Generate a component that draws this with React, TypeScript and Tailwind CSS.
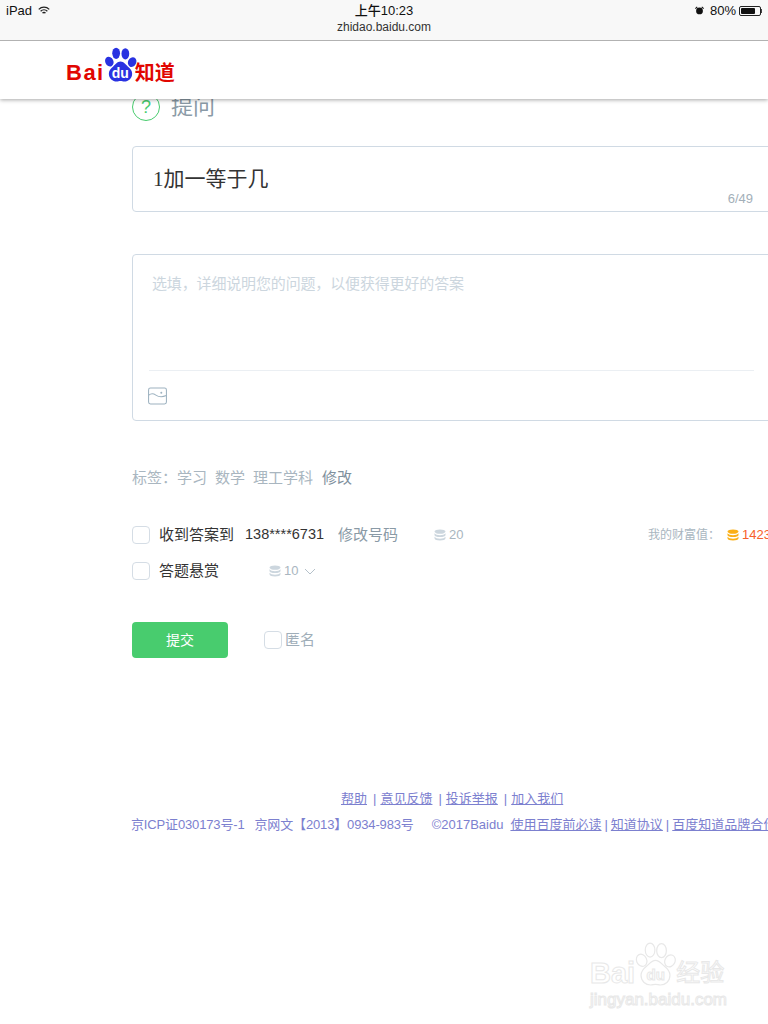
import React from "react";

const cjk = "font-['Liberation_Sans','Noto_Sans_CJK_SC',sans-serif]";

function Coins({ className }: { className: string }) {
  return (
    <svg viewBox="0 0 12 12" className={className} fill="currentColor">
      <ellipse cx="6" cy="2.600" rx="5.500" ry="2.200" />
      <path d="M.5 4.300c.8 1.300 3 2 5.500 2s4.700-.7 5.500-2v1.600c0 1.300-2.400 2.200-5.500 2.200S.5 7.200.5 5.900z" />
      <path d="M.5 7.700c.8 1.300 3 2 5.500 2s4.700-.7 5.500-2v1.500c0 1.300-2.400 2.300-5.500 2.300S.5 10.500.5 9.200z" />
    </svg>
  );
}

function Paw({ outline }: { outline?: boolean }) {
  const props = outline
    ? { fill: "#fff", stroke: "#e8e8e8", strokeWidth: 1 }
    : { fill: "#2932e1" };
  return (
    <svg viewBox="0 0 34 37" className="w-full h-full" {...props}>
      <ellipse cx="5.500" cy="15" rx="4.200" ry="5.200" transform="rotate(-25 5.500 15)" />
      <ellipse cx="12.500" cy="6.500" rx="4" ry="5.800" />
      <ellipse cx="22" cy="7" rx="4" ry="5.800" />
      <ellipse cx="29" cy="15.500" rx="4.200" ry="5.200" transform="rotate(25 29 15.500)" />
      <path d="M17 15c3.500 0 5 3 7.500 5 3 2.400 4.500 4.500 4.500 7.500 0 5-4 8-8 8-1.500 0-2.500-.5-4-.5s-2.500.5-4 .5c-4 0-8-3-8-8 0-3 1.500-5.100 4.500-7.500 2.500-2 4-5 7.500-5z" />
    </svg>
  );
}

function Box() {
  return <span className="block w-[18px] h-[18px] rounded-[4px] border border-[#d5dde5] bg-white shrink-0" />;
}

export default function App() {
  return (
    <div className={`relative w-[768px] h-[1024px] overflow-hidden bg-white ${cjk}`}>
      {/* ios status bar + address */}
      <div className="relative z-20 h-[41px] bg-[#f8f8f8] border-b border-[#b2b2b2] grid grid-cols-3 px-[6px] text-[#111]">
        <div className="flex items-start gap-[6px] pt-[3px] text-[13px] leading-[16px]">
          <span>iPad</span>
          <svg viewBox="0 0 16 12" className="w-[12px] h-[9px] mt-[3px]" fill="none" stroke="#222" strokeWidth="1.700">
            <path d="M1 4.500a10 10 0 0 1 14 0" />
            <path d="M3.500 7a6.500 6.500 0 0 1 9 0" />
            <path d="M6 9.500a2.800 2.800 0 0 1 4 0" />
          </svg>
        </div>
        <div className="flex flex-col items-center pt-[3px]">
          <span className="text-[13px] leading-[16px] font-medium">上午10:23</span>
          <span className="text-[12px] leading-[14px] mt-[1px] text-[#333]">zhidao.baidu.com</span>
        </div>
        <div className="flex items-start justify-end pt-[3px] text-[13px] leading-[16px]">
          <svg viewBox="0 0 12 12" className="w-[9px] h-[9px] mt-[3px] mr-[6px]" fill="#111">
            <circle cx="6" cy="6.500" r="4.500" />
            <path d="M0 3l2.500-2.500 1 1L1 4zM12 3L9.500.5l-1 1L11 4z" />
          </svg>
          <span>80%</span>
          <span className="ml-[3px] mt-[3px] w-[22px] h-[10px] border border-[#222] rounded-[2px] p-[1px] block">
            <span className="block h-full w-[80%] bg-[#111] rounded-[1px]" />
          </span>
          <span className="mt-[6px] w-[1px] h-[4px] bg-[#444] block" />
        </div>
      </div>

      {/* site header */}
      <header className="relative z-10 h-[58px] bg-white shadow-[0_1px_4px_rgba(0,0,0,0.35)] flex items-end pl-[66px] pb-[16px]">
        <div className="flex items-end h-[36px]">
          <span className="text-[#e10601] font-bold text-[22px] leading-[20px] tracking-[1.5px] font-['Liberation_Sans',sans-serif]">Bai</span>
          <span className="relative w-[33px] h-[36px] -ml-[1px] block">
            <Paw />
            <span className="absolute left-0 right-0 bottom-[3px] text-center text-white font-bold text-[14px] leading-[14px]">du</span>
          </span>
          <span className="text-[#e10601] font-bold text-[20px] leading-[20px] -ml-[2px]">知道</span>
        </div>
      </header>

      <main className="pl-[132px] w-[772px]">
        {/* title sits partly under the header */}
        <div className="flex items-center gap-[11px] -mt-[6px] h-[28px] mb-[25px]">
          <span className="w-[28px] h-[28px] rounded-full border-[1.500px] border-[#48cc6e] flex items-center justify-center text-[#48cc6e] text-[18px] leading-none">?</span>
          <span className="text-[22px] leading-[28px] text-[#8a9aa6]">提问</span>
        </div>

        <div className="relative h-[66px] border border-[#d0dae4] rounded-[4px] pl-[20px] pt-[19px]">
          <span className="block text-[21px] leading-[26px] text-[#333] font-['Liberation_Serif','Noto_Sans_CJK_SC',serif]">1加一等于几</span>
          <span className="absolute right-[18px] bottom-[5px] text-[13px] leading-[15px] text-[#a3afb9]">6/49</span>
        </div>

        <div className="mt-[42px] h-[167px] border border-[#d0dae4] rounded-[4px] pl-[16px] pr-[17px] flex flex-col">
          <div className="h-[116px] pl-[3px] pt-[20px] border-b border-[#ebeff3] text-[15px] leading-[18px] tracking-[-0.15px] text-[#ccd6de]">
            选填，详细说明您的问题，以便获得更好的答案
          </div>
          <svg viewBox="0 0 20 18" className="w-[19px] h-[18px] mt-[16px] -ml-[1px]" fill="none" stroke="#9db2c0" strokeWidth="1.100">
            <rect x="0.600" y="0.600" width="18.800" height="16.800" rx="2" />
            <path d="M0.800 8c3-2.500 5-1.800 7.500 0s5 3 11 .5" />
            <circle cx="14" cy="5.500" r="0.500" />
          </svg>
        </div>

        <div className="mt-[47px] flex items-center h-[20px] text-[15px] text-[#a9b6c0]">
          <span>标签：</span>
          <span>学习</span>
          <span className="ml-[8px]">数学</span>
          <span className="ml-[8px]">理工学科</span>
          <span className="ml-[9px] text-[#7f909d]">修改</span>
        </div>

        <div className="mt-[37px] relative flex items-center h-[20px] text-[15px]">
          <Box />
          <span className="ml-[9px] text-[#333]">收到答案到</span>
          <span className="ml-[11px] text-[14.500px] text-[#333]">138****6731</span>
          <span className="ml-[14px] text-[#8a9aa6]">修改号码</span>
          <Coins className="w-[12px] h-[12px] ml-[36px] text-[#ccd6de]" />
          <span className="ml-[3px] text-[13px] text-[#a9b6c0]">20</span>
          <span className="ml-[auto] mr-[7px] text-[12px] text-[#a9b6c0]">我的财富值：</span>
          <Coins className="w-[12px] h-[12px] text-[#fbb016]" />
          <span className="ml-[3px] text-[13px] text-[#f7602a] w-[30px] whitespace-nowrap">1423</span>
        </div>

        <div className="mt-[16px] flex items-center h-[20px] text-[15px]">
          <Box />
          <span className="ml-[9px] text-[#333]">答题悬赏</span>
          <Coins className="w-[12px] h-[12px] ml-[50px] text-[#ccd6de]" />
          <span className="ml-[3px] text-[13px] text-[#a9b6c0]">10</span>
          <svg viewBox="0 0 12 7" className="w-[12px] h-[7px] ml-[6px]" fill="none" stroke="#b5c1ca" strokeWidth="1">
            <path d="M1 1l5 5 5-5" />
          </svg>
        </div>

        <div className="mt-[41px] flex items-center">
          <button className="w-[96px] h-[36px] rounded-[4px] bg-[#48cc6e] text-white text-[14px]">提交</button>
          <span className="ml-[36px] flex items-center">
            <Box />
            <span className="ml-[3px] text-[15px] text-[#a0aeb9]">匿名</span>
          </span>
        </div>
      </main>

      <footer className="mt-[132px] text-[13px] leading-[18px] text-[#7c80cf] whitespace-nowrap">
        <div className="pl-[341px] flex">
          <a className="underline">帮助</a>
          <span className="ml-[6px]">|</span>
          <a className="underline ml-[4px]">意见反馈</a>
          <span className="ml-[6px]">|</span>
          <a className="underline ml-[4px]">投诉举报</a>
          <span className="ml-[6px]">|</span>
          <a className="underline ml-[4px]">加入我们</a>
        </div>
        <div className="pl-[131px] mt-[8px] flex">
          <span className="tracking-[-0.15px]">京ICP证030173号-1</span>
          <span className="ml-[10px] tracking-[-0.15px]">京网文【2013】0934-983号</span>
          <span className="ml-[18px]">©2017Baidu</span>
          <a className="underline ml-[7px]">使用百度前必读</a>
          <span className="ml-[3px]">|</span>
          <a className="underline ml-[3px]">知道协议</a>
          <span className="ml-[3px]">|</span>
          <a className="underline ml-[3px]">百度知道品牌合作</a>
        </div>
      </footer>

      {/* jingyan watermark over the page */}
      <div className="absolute left-[590px] top-[941px] w-[140px] h-[78px] text-white [-webkit-text-stroke:1px_#e8e8e8]">
        <div className="flex items-end h-[46px]">
          <span className="font-bold text-[29px] leading-[28px]">Bai</span>
          <span className="relative w-[41px] h-[45px] block shrink-0">
            <Paw outline />
            <span className="absolute left-0 right-0 bottom-[4px] text-center text-[15px] leading-[16px] font-bold">du</span>
          </span>
          <span className="text-[24px] leading-[28px] whitespace-nowrap">经验</span>
        </div>
        <div className="mt-[2px] text-[17px] leading-[22px] whitespace-nowrap">jingyan.baidu.com</div>
      </div>
    </div>
  );
}
